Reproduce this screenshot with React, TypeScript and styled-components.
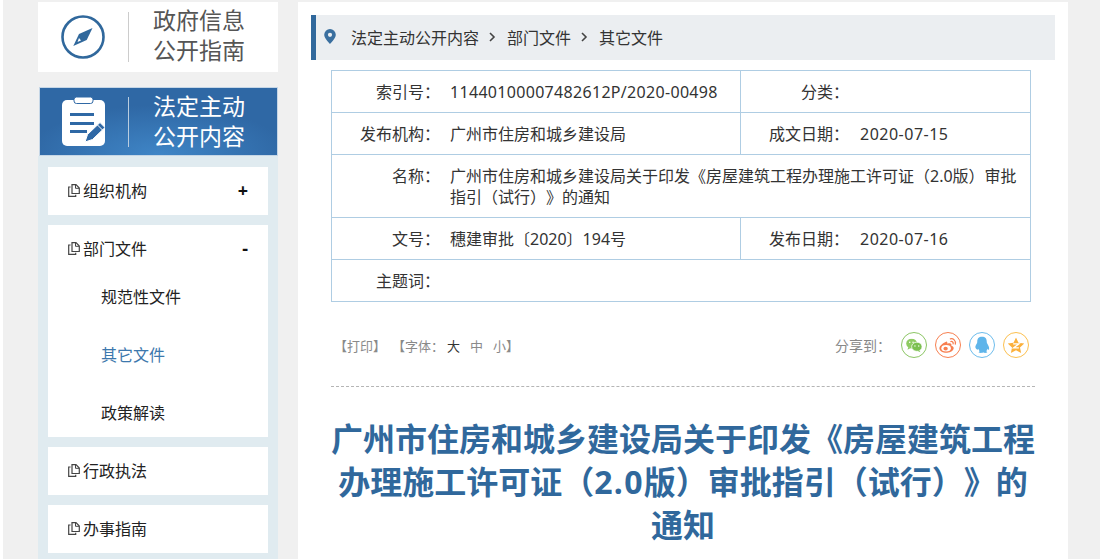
import styled, { createGlobalStyle } from 'styled-components';

const GlobalStyle = createGlobalStyle`
  html, body {
    margin: 0;
    padding: 0;
    height: 559px;
    overflow: hidden;
    background: #fff;
    font-family: "Noto Sans", "Noto Sans CJK SC", sans-serif;
    text-spacing-trim: space-all;
  }
`;

const menu = [
  { name: '组织机构', mark: '+', open: false },
  { name: '部门文件', mark: '-', open: true },
  { name: '行政执法', mark: '', open: false },
  { name: '办事指南', mark: '', open: false },
];

const subMenu = ['规范性文件', '其它文件', '政策解读'];

const rows = [
  { label: '索引号：', value: '11440100007482612P/2020-00498', code: true, label2: '分类：', value2: '' },
  { label: '发布机构：', value: '广州市住房和城乡建设局', label2: '成文日期：', value2: '2020-07-15' },
  { label: '名称：', value: '广州市住房和城乡建设局关于印发《房屋建筑工程办理施工许可证（2.0版）审批指引（试行）》的通知' },
  { label: '文号：', value: '穗建审批〔2020〕194号', label2: '发布日期：', value2: '2020-07-16' },
  { label: '主题词：', value: '' },
];

export default function App() {
  return (
    <>
      <GlobalStyle />
      <Page>
        <Side>
          <GuideCard>
            <CompassIcon />
            <Divider $color="#ccc" />
            <BoxTitle $color="#555">政府信息<br />公开指南</BoxTitle>
          </GuideCard>
          <ContentHead>
            <ClipboardIcon />
            <Divider $color="#b9cde0" />
            <BoxTitle $color="#fff">法定主动<br />公开内容</BoxTitle>
          </ContentHead>
          <MenuPanel>
            {menu.map((item) => (
              <MenuCard key={item.name}>
                <MenuHead>
                  <DocIcon />
                  <span>{item.name}</span>
                  <Mark>{item.mark}</Mark>
                </MenuHead>
                {item.open &&
                  subMenu.map((sub) => (
                    <SubItem key={sub} $active={sub === '其它文件'}>{sub}</SubItem>
                  ))}
              </MenuCard>
            ))}
          </MenuPanel>
        </Side>

        <Main>
          <Crumbs>
            <PinIcon />
            <CrumbText>法定主动公开内容</CrumbText>
            <Chevron />
            <CrumbText>部门文件</CrumbText>
            <Chevron />
            <CrumbText>其它文件</CrumbText>
          </Crumbs>

          <InfoTable>
            {rows.map((row) => (
              <InfoRow key={row.label}>
                <LabelCell>{row.label}</LabelCell>
                <ValueCell $wide={row.label2 === undefined} $code={row.code}>{row.value}</ValueCell>
                {row.label2 !== undefined && (
                  <SecondCell>
                    <SecondLabel>{row.label2}</SecondLabel>
                    <DateText>{row.value2}</DateText>
                  </SecondCell>
                )}
              </InfoRow>
            ))}
          </InfoTable>

          <ToolBar>
            <Tools>
              <ToolGroup>【打印】</ToolGroup>
              <ToolGroup>【字体：</ToolGroup>
              <FontSize $dark>大</FontSize>
              <FontSize>中</FontSize>
              <FontSize>小</FontSize>
              <span>】</span>
            </Tools>
            <Share>
              <ShareLabel>分享到：</ShareLabel>
              <ShareRow>
                <ShareBtn $color="#8cc665"><WechatIcon /></ShareBtn>
                <ShareBtn $color="#f77f50"><WeiboIcon /></ShareBtn>
                <ShareBtn $color="#6cbcec"><QQIcon /></ShareBtn>
                <ShareBtn $color="#fcc04f"><StarIcon /></ShareBtn>
              </ShareRow>
            </Share>
          </ToolBar>

          <ArticleTitle>
            广州市住房和城乡建设局关于印发《房屋建筑工程办理施工许可证（<VersionText>2.0</VersionText>版）审批指引（试行）》的通知
          </ArticleTitle>
        </Main>
      </Page>
    </>
  );
}

const CompassIcon = () => (
  <svg width="44" height="44" viewBox="0 0 44 44">
    <circle cx="22" cy="22" r="20.500" fill="none" stroke="#30689c" strokeWidth="2.600" />
    <path d="M31.500 13 L25.700 25 L12.300 31 L18 19 Z" fill="#30689c" />
    <path d="M18 23 L20 25.500 L16.500 27 Z" fill="#fff" />
  </svg>
);

const ClipboardIcon = () => (
  <svg width="43" height="50" viewBox="0 0 43 50">
    <rect x="0" y="3" width="43" height="46" rx="5" fill="#fff" />
    <rect x="12" y="0" width="19" height="6.500" rx="2.500" fill="#fff" stroke="#2f68a5" strokeWidth="1" />
    <rect x="8" y="16" width="24" height="3" fill="#2f68a5" />
    <rect x="8" y="25" width="24" height="3" fill="#2f68a5" />
    <rect x="8" y="33" width="17" height="3" fill="#2f68a5" />
    <path d="M23 45 L25.500 37.500 L38 25.500 L43 30.500 L30.500 42.500 Z" fill="#2f68a5" stroke="#fff" strokeWidth="1" />
    <path d="M35.500 28 L40.500 33" stroke="#fff" strokeWidth="1" />
  </svg>
);

const DocIcon = () => (
  <DocSvg width="12" height="13" viewBox="0 0 12 13">
    <path d="M4 .7h4l3.300 3.300v5.500H4z" fill="none" stroke="#444" strokeWidth="1.200" />
    <path d="M7.500 1v3.300h3.500" fill="none" stroke="#444" strokeWidth="1" />
    <path d="M2.600 3H.7v9.300h7v-1.600" fill="none" stroke="#444" strokeWidth="1.200" />
  </DocSvg>
);

const PinIcon = () => (
  <PinSvg width="12" height="15" viewBox="0 0 12 15">
    <path fillRule="evenodd" d="M6 0a5.800 5.800 0 0 1 5.800 5.800C11.800 9.500 6 15 6 15S.2 9.500.2 5.800A5.800 5.800 0 0 1 6 0zm0 3.700a2.100 2.100 0 1 0 0 4.200 2.100 2.100 0 0 0 0-4.200z" fill="#3a6f9f" />
  </PinSvg>
);

const Chevron = () => (
  <ChevronSvg width="7" height="10" viewBox="0 0 7 10">
    <path d="M1 1l4 4-4 4" fill="none" stroke="#444" strokeWidth="1.600" />
  </ChevronSvg>
);

const WechatIcon = () => (
  <svg width="18" height="15" viewBox="0 0 18 15">
    <ellipse cx="6.500" cy="5.500" rx="5.700" ry="5.200" fill="#8fcb62" />
    <path d="M3 9l-.8 3 3.500-2z" fill="#8fcb62" />
    <ellipse cx="12" cy="8.800" rx="5.500" ry="4.800" fill="#7cc050" stroke="#fff" strokeWidth="0.800" />
    <path d="M14.500 12.500l1.300 2-3.300-1.500z" fill="#7cc050" />
    <circle cx="4.500" cy="4" r="0.800" fill="#fff" />
    <circle cx="8" cy="4" r="0.800" fill="#fff" />
    <circle cx="10" cy="8" r="0.700" fill="#fff" />
    <circle cx="14" cy="8" r="0.700" fill="#fff" />
  </svg>
);

const WeiboIcon = () => (
  <svg width="20" height="17" viewBox="0 0 20 17">
    <path d="M8 4.500C3.500 6.500 0.500 9.500 1 12c.6 3 4.500 4.500 8 4.200 4-.3 7-2.500 7-5 0-1.500-1.500-2.200-2.500-2.500.6-1.800-.5-3.200-2.800-2.500-1 .3-1.500.5-1.500.5.300-1.800-.2-2.600-1.200-2.200z" fill="#f77f50" />
    <ellipse cx="8" cy="11.500" rx="5" ry="3.400" fill="#fff" />
    <ellipse cx="7.500" cy="11.800" rx="2.300" ry="1.900" fill="#f77f50" />
    <path d="M12.500 1.500c3-.8 6 2 5.200 5.500M13 4.300c1.500-.4 2.800.8 2.400 2.400" fill="none" stroke="#f77f50" strokeWidth="1.300" strokeLinecap="round" />
  </svg>
);

const QQIcon = () => (
  <svg width="16" height="18" viewBox="0 0 16 18">
    <path d="M8 0c3.500 0 5 2.500 5 5.500 0 1 .2 1.500.8 2.500 1.200 2 2 4 1.700 5.500-.3 1-1 .5-1.700-.5-.2 1-.7 2-1.500 2.500 1 .4 1.500 1 1 1.500-.8.600-4 .5-4.300 0-.3.500-3.500.6-4.300 0-.5-.5 0-1.100 1-1.500-.8-.5-1.300-1.500-1.500-2.500-.7 1-1.400 1.500-1.700.5C.200 12 1 10 2.200 8c.6-1 .8-1.500.8-2.500C3 2.500 4.500 0 8 0z" fill="#5fb5ea" />
  </svg>
);

const StarIcon = () => (
  <svg width="18" height="17" viewBox="0 0 18 17">
    <path d="M9 0l2.600 5.600 6.100.7-4.500 4.200 1.200 6L9 13.500 3.600 16.500l1.200-6L.3 6.300l6.100-.7z" fill="#fbb03b" />
    <path d="M6 6.800h6L6.500 11h5.500" fill="none" stroke="#fff" strokeWidth="1.400" />
  </svg>
);

const Page = styled.div`
  box-sizing: border-box;
  width: 1097px;
  height: 559px;
  margin-left: 3px;
  padding: 2px 29px 0 35px;
  background: #f0f0f0;
  display: flex;
  align-items: flex-start;
  overflow: hidden;
`;

const Side = styled.div`
  flex: none;
  width: 240px;
  margin-right: 20px;
`;

const GuideCard = styled.div`
  height: 70px;
  background: #fff;
  display: flex;
  align-items: center;
  padding-left: 23px;
`;

const Divider = styled.div<{ $color: string }>`
  flex: none;
  width: 1px;
  height: 50px;
  margin: 0 24px 0 23px;
  background: ${({ $color }) => $color};
`;

const BoxTitle = styled.div<{ $color: string }>`
  font-size: 23px;
  line-height: 30px;
  margin-bottom: 5px;
  color: ${({ $color }) => $color};
  white-space: nowrap;
`;

const ContentHead = styled.div`
  box-sizing: border-box;
  height: 69px;
  margin: 15px 0 0 1px;
  width: 239px;
  border: 1px solid #c5d6e6;
  background: radial-gradient(ellipse 130px 50px at 50% 100%, #3f85c6 0%, #2f68a5 100%);
  display: flex;
  align-items: center;
  padding-left: 22px;
  & ${BoxTitle} {
    margin-bottom: 1px;
  }
`;

const MenuPanel = styled.div`
  background: #e0ebf0;
  padding: 11px 10px 6px;
  display: flex;
  flex-direction: column;
  gap: 10px;
`;

const MenuCard = styled.div`
  background: #fff;
`;

const MenuHead = styled.div`
  box-sizing: border-box;
  height: 48px;
  padding: 0 20px 2px;
  display: flex;
  align-items: center;
  font-size: 16px;
  color: #222;
`;

const DocSvg = styled.svg`
  flex: none;
  margin-right: 3px;
`;

const Mark = styled.span`
  margin-left: auto;
  font-size: 18px;
  font-weight: 700;
  color: #111;
`;

const SubItem = styled.div<{ $active?: boolean }>`
  height: 58px;
  line-height: 48px;
  padding-left: 53px;
  font-size: 16px;
  color: ${({ $active }) => ($active ? '#3d78ad' : '#222')};
  &:last-child {
    height: 48px;
  }
`;

const Main = styled.div`
  box-sizing: border-box;
  flex: none;
  width: 770px;
  height: 557px;
  padding: 13px 13px 0;
  background: #fff;
  overflow: hidden;
`;

const Crumbs = styled.div`
  box-sizing: border-box;
  height: 45px;
  border-left: 5px solid #30689c;
  background: #ebeef1;
  display: flex;
  align-items: center;
  padding: 0 0 2px 8px;
`;

const PinSvg = styled.svg`
  flex: none;
  margin-right: 15px;
`;

const ChevronSvg = styled.svg`
  flex: none;
  margin: 0 11px 0 10px;
`;

const CrumbText = styled.span`
  font-size: 16px;
  color: #333;
`;

const InfoTable = styled.div`
  width: 700px;
  margin: 10px 0 0 20px;
  border: 1px solid #afcde3;
  border-bottom: none;
  font-size: 16px;
  color: #333;
  box-sizing: border-box;
`;

const InfoRow = styled.div`
  display: flex;
  border-bottom: 1px solid #afcde3;
  min-height: 41px;
  line-height: 21px;
`;

const LabelCell = styled.div`
  flex: none;
  width: 108px;
  padding-top: 11px;
  text-align: right;
  white-space: nowrap;
`;

const ValueCell = styled.div<{ $wide: boolean; $code?: boolean }>`
  box-sizing: border-box;
  width: ${({ $wide }) => ($wide ? '590px' : '301px')};
  padding: 11px ${({ $wide }) => ($wide ? '8px' : '0')} 9px 10px;
  ${({ $wide }) => ($wide ? '' : 'border-right: 1px solid #afcde3;')}
  ${({ $code }) => ($code ? 'letter-spacing: 0.31px;' : '')}
`;

const SecondCell = styled.div`
  flex: 1;
  display: flex;
  padding-top: 11px;
  white-space: nowrap;
`;

const SecondLabel = styled.span`
  width: 108px;
  text-align: right;
  margin-right: 11px;
`;

const DateText = styled.span`
  letter-spacing: 0.5px;
`;

const ToolBar = styled.div`
  box-sizing: border-box;
  height: 85px;
  width: 704px;
  margin-left: 20px;
  border-bottom: 1px dashed #b5b5b5;
  display: flex;
  justify-content: space-between;
  align-items: flex-start;
`;

const Tools = styled.div`
  display: flex;
  font-size: 13px;
  line-height: 20px;
  color: #8a8a8a;
  white-space: nowrap;
  margin: 34px 0 0 3px;
`;

const ToolGroup = styled.span`
  margin-right: 6px;
  &:nth-child(2) {
    margin-right: 3px;
  }
`;

const FontSize = styled.span<{ $dark?: boolean }>`
  margin-right: 10px;
  color: ${({ $dark }) => ($dark ? '#333' : '#8a8a8a')};
  &:nth-child(5) {
    margin-right: 0;
  }
`;

const Share = styled.div`
  display: flex;
  align-items: center;
  height: 30px;
  margin: 28px 6px 0 0;
`;

const ShareLabel = styled.span`
  font-size: 14px;
  color: #888;
  margin-right: 10px;
`;

const ShareRow = styled.div`
  display: flex;
  gap: 8px;
`;

const ShareBtn = styled.div<{ $color: string }>`
  box-sizing: border-box;
  width: 26px;
  height: 26px;
  border: 1px solid ${({ $color }) => $color};
  border-radius: 50%;
  display: flex;
  align-items: center;
  justify-content: center;
  & svg {
    transform: scale(0.95);
  }
`;

const ArticleTitle = styled.h1`
  width: 704px;
  margin: 30px 0 0 20px;
  font-size: 32px;
  line-height: 43px;
  font-weight: 700;
  color: #30689c;
  text-align: center;
`;

const VersionText = styled.span`
  letter-spacing: 1.3px;
`;
